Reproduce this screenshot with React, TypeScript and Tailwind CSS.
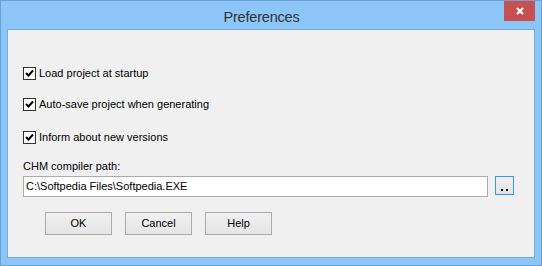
import React from "react";

const font = { fontFamily: '"Liberation Sans", Arial, sans-serif' };

function Check({ label, className = "" }: { label: string; className?: string }) {
  return (
    <label className={`flex items-center gap-[3px] ${className}`}>
      <span className="w-[13px] h-[13px] border border-[#333] bg-white flex items-center justify-center">
        <svg width="9" height="9" viewBox="0 0 9 9">
          <path d="M1 4 L3.5 6.5 L8 1.5" stroke="#000" strokeWidth="2" fill="none" />
        </svg>
      </span>
      <span className="text-[11px] text-black leading-none">{label}</span>
    </label>
  );
}

function Btn({ children }: { children: React.ReactNode }) {
  return (
    <button className="w-[67px] h-[23px] border border-[#acacac] bg-gradient-to-b from-[#f0f0f0] to-[#e5e5e5] text-[11px] text-black">
      {children}
    </button>
  );
}

export default function App() {
  return (
    <div style={font} className="w-[542px] h-[266px] bg-[#8cc6f9] border border-[#6f9fd2] flex flex-col px-[6px] pb-[7px]">
      <div className="h-[28px] flex items-start">
        <div className="flex-1 text-center text-[14.5px] text-[#333] pt-[6px] pl-[12px] tracking-[-0.2px]">Preferences</div>
        <div className="w-[31px] h-[20px] bg-[#c75050] flex items-center justify-center">
          <svg width="8" height="8" viewBox="0 0 8 8">
            <path d="M1 1 L7 7 M7 1 L1 7" stroke="#fff" strokeWidth="2" />
          </svg>
        </div>
      </div>
      <div className="flex-1 border border-[#78a9da] bg-[#f0f0f0] flex flex-col pl-[15px]">
        <Check label="Load project at startup" className="mt-[37px]" />
        <Check label="Auto-save project when generating" className="mt-[18px]" />
        <Check label="Inform about new versions" className="mt-[20px]" />
        <div className="text-[11px] text-black mt-[17px] leading-none">CHM compiler path:</div>
        <div className="flex items-start mt-[4px]">
          <div className="w-[465px] h-[21px] border border-[#ababab] bg-white flex items-center pl-[2px] text-[11px] text-black">
            C:\Softpedia Files\Softpedia.EXE
          </div>
          <button className="ml-[7px] w-[19px] h-[19px] border border-[#3399ff] bg-gradient-to-b from-[#f0f0f0] to-[#e3e3e3] flex items-end justify-center pb-[3px]">
            <span className="flex gap-[3px]">
              <span className="w-[2px] h-[2px] bg-black" />
              <span className="w-[2px] h-[2px] bg-black" />
            </span>
          </button>
        </div>
        <div className="flex gap-[13px] mt-[15px] ml-[22px]">
          <Btn>OK</Btn>
          <Btn>Cancel</Btn>
          <Btn>Help</Btn>
        </div>
      </div>
    </div>
  );
}
